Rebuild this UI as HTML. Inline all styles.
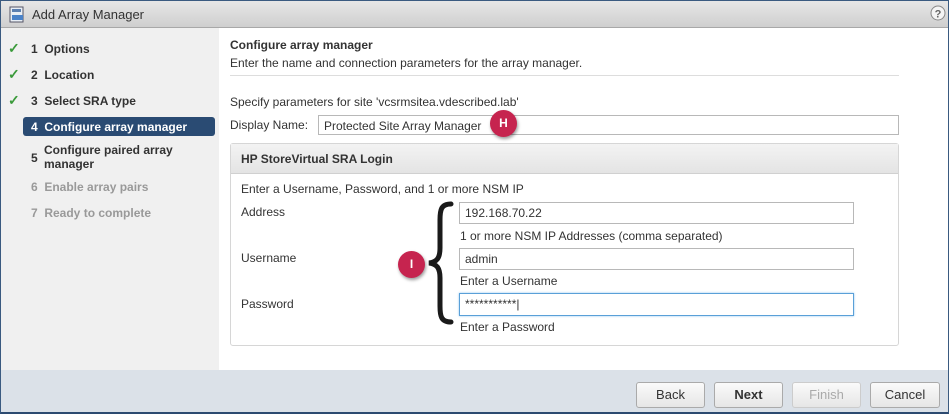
<!DOCTYPE html>
<html><head><style>
*{box-sizing:border-box;margin:0;padding:0}
body{width:949px;height:414px;overflow:hidden;background:#fff;font-family:"Liberation Sans",Arial,sans-serif;font-size:12px;color:#333;position:relative}
.frame{position:absolute;left:0;top:0;width:949px;height:414px;border:1px solid #3a5a80;border-bottom:2px solid #2c4a70}
.title{position:absolute;left:1px;top:1px;width:947px;height:27px;background:linear-gradient(#e6e6e6,#cfcfcf);border-bottom:1px solid #a8a8a8}
.title span{position:absolute;left:31px;top:6px;font-size:13px;color:#333}
.left{position:absolute;left:1px;top:28px;width:218px;height:342px;background:#f0f0f0}
.step{position:absolute;font-size:12px;font-weight:bold;color:#333}
.dim{color:#999}
.ck{position:absolute;left:8px;color:#3a9a3a;font-size:14px;font-weight:bold}
.sel{position:absolute;left:23px;top:117px;width:192px;height:19px;background:#2a4b73;border-radius:3px;color:#fff}
.abs{position:absolute}
.inp{position:absolute;border:1px solid #b8b8b8;background:#fff;height:20px;font-size:12px;padding:3px 5px;color:#333}
.btn{position:absolute;top:382px;height:26px;border:1px solid #aaa;border-radius:3px;background:linear-gradient(#fafafa,#e6e6e6);text-align:center;line-height:24px;font-size:13px;color:#333}
.badge{position:absolute;width:27px;height:27px;border-radius:50%;background:#c6244f;color:#fff;font-weight:bold;font-size:12px;text-align:center;line-height:27px;box-shadow:1px 2px 3px rgba(0,0,0,.4)}
</style></head><body>
<div class="title"><svg class="abs" style="left:8px;top:5px" width="16" height="17"><rect x="1" y="1" width="13" height="15" fill="#e8eef5" stroke="#556" /><rect x="3" y="3" width="9" height="3" fill="#5b7fb0"/><rect x="3" y="9" width="11" height="5" fill="#4a82c8"/></svg><span>Add Array Manager</span>
<svg class="abs" style="left:929px;top:4px" width="16" height="16"><circle cx="8" cy="8" r="7" fill="#f4f4f4" stroke="#888"/><text x="8" y="12.5" text-anchor="middle" font-size="11" font-weight="bold" fill="#666" font-family="Liberation Sans">?</text></svg></div>
<div class="left"></div>
<div class="ck" style="top:40px">✓</div><div class="step" style="left:31px;top:42px">1&nbsp; Options</div>
<div class="ck" style="top:66px">✓</div><div class="step" style="left:31px;top:68px">2&nbsp; Location</div>
<div class="ck" style="top:92px">✓</div><div class="step" style="left:31px;top:94px">3&nbsp; Select SRA type</div>
<div class="sel"></div><div class="step" style="left:31px;top:120px;color:#fff">4&nbsp; Configure array manager</div>
<div class="step" style="left:31px;top:151px">5</div><div class="step" style="left:44px;top:143px;line-height:14px">Configure paired array<br>manager</div>
<div class="step dim" style="left:31px;top:180px">6&nbsp; Enable array pairs</div>
<div class="step dim" style="left:31px;top:206px">7&nbsp; Ready to complete</div>

<div class="abs" style="left:230px;top:38px;font-weight:bold">Configure array manager</div>
<div class="abs" style="left:230px;top:56px">Enter the name and connection parameters for the array manager.</div>
<div class="abs" style="left:230px;top:75px;width:669px;border-top:1px solid #ddd"></div>
<div class="abs" style="left:230px;top:95px">Specify parameters for site 'vcsrmsitea.vdescribed.lab'</div>
<div class="abs" style="left:230px;top:118px">Display Name:</div>
<div class="inp" style="left:318px;top:115px;width:581px">Protected Site Array Manager</div>
<div class="abs" style="left:230px;top:143px;width:669px;height:203px;border:1px solid #d6d6d6;border-radius:3px"></div>
<div class="abs" style="left:231px;top:144px;width:667px;height:30px;background:linear-gradient(#f3f3f3,#e4e4e4);border-bottom:1px solid #d0d0d0;font-weight:bold;padding:8px 0 0 10px">HP StoreVirtual SRA Login</div>
<div class="abs" style="left:241px;top:182px">Enter a Username, Password, and 1 or more NSM IP</div>
<div class="abs" style="left:241px;top:205px">Address</div>
<div class="abs" style="left:241px;top:251px">Username</div>
<div class="abs" style="left:241px;top:297px">Password</div>
<div class="inp" style="left:459px;top:202px;width:395px;height:22px">192.168.70.22</div>
<div class="abs" style="left:460px;top:229px">1 or more NSM IP Addresses (comma separated)</div>
<div class="inp" style="left:459px;top:248px;width:395px;height:22px">admin</div>
<div class="abs" style="left:460px;top:274px">Enter a Username</div>
<div class="inp" style="left:459px;top:293px;width:395px;height:23px;border:1px solid #5aa0d8;box-shadow:0 0 2px #8cc4ee">***********|</div>
<div class="abs" style="left:460px;top:320px">Enter a Password</div>
<svg class="abs" style="left:425px;top:200px" width="30" height="126"><path d="M26 4 C16 4 15 10 15 20 L15 48 C15 58 12 62 4 63 C12 64 15 68 15 78 L15 106 C15 116 16 122 26 122" fill="none" stroke="#1a1a1a" stroke-width="5" stroke-linecap="round"/></svg>
<div class="badge" style="left:490px;top:110px">H</div>
<div class="badge" style="left:398px;top:251px">I</div>

<div class="abs" style="left:1px;top:370px;width:947px;height:42px;background:#dbe1e8"></div>
<div class="btn" style="left:636px;width:69px">Back</div>
<div class="btn" style="left:714px;width:69px;font-weight:bold">Next</div>
<div class="btn" style="left:792px;width:69px;color:#aaa;border-color:#ccc">Finish</div>
<div class="btn" style="left:870px;width:70px">Cancel</div>
<div class="frame"></div>
</body></html>
